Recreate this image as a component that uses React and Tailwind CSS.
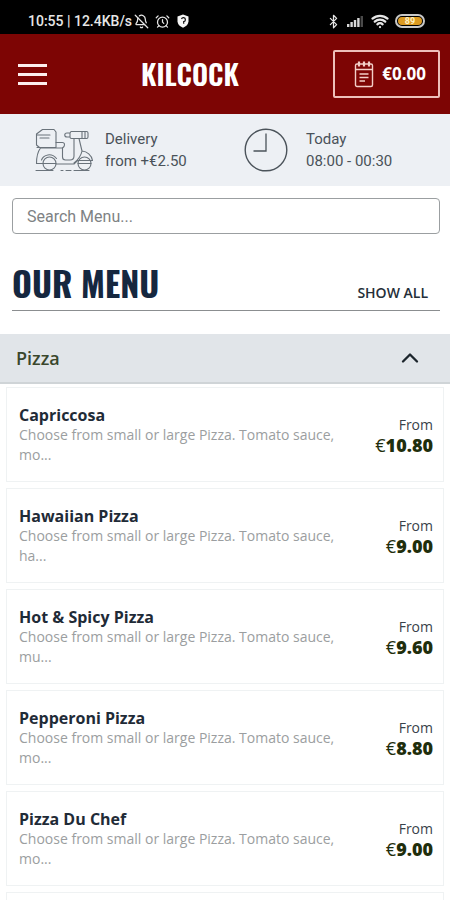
import React, { useState } from 'react';
import { AlarmClock, BellOff, Bluetooth, ChevronUp, Wifi } from 'lucide-react';

const PIZZAS = [
  { name: 'Capriccosa', description: 'Choose from small or large Pizza. Tomato sauce, mo...', price: '10.80' },
  { name: 'Hawaiian Pizza', description: 'Choose from small or large Pizza. Tomato sauce, ha...', price: '9.00' },
  { name: 'Hot & Spicy Pizza', description: 'Choose from small or large Pizza. Tomato sauce, mu...', price: '9.60' },
  { name: 'Pepperoni Pizza', description: 'Choose from small or large Pizza. Tomato sauce, mo...', price: '8.80' },
  { name: 'Pizza Du Chef', description: 'Choose from small or large Pizza. Tomato sauce, mo...', price: '9.00' },
];

const SignalIcon = () => (
  <svg className="w-[18px] h-[14px]" viewBox="0 0 18 14" fill="#d8d8d8">
    <rect x="0" y="10" width="2.4" height="3" />
    <rect x="3.4" y="8" width="2.4" height="5" />
    <rect x="6.8" y="6" width="2.4" height="7" />
    <rect x="10.2" y="4" width="2.4" height="9" />
    <rect x="13.6" y="2" width="2.4" height="11" fill="#4a4a4a" />
  </svg>
);

const ShieldIcon = () => (
  <svg className="w-3.5 h-3.5" viewBox="0 0 14 14">
    <path d="M7 .5 12.5 2.500v4.700c0 3-2.300 5.200-5.500 6.500-3.200-1.300-5.500-3.500-5.500-6.500V2.500z" fill="#f5f5f5" />
    <path d="M5.500 5a2 2 0 1 1 2.200 2.600v2.200" fill="none" stroke="#111" strokeWidth="1.200" />
  </svg>
);

const NotepadIcon = () => (
  <svg className="w-5 h-7" viewBox="0 0 20 28" fill="none" stroke="#f3cfc8" strokeWidth="1.400">
    <rect x="1.500" y="4" width="17" height="22.500" rx="1.500" />
    <path d="M1.500 9.500h17M5.500 14h9M5.500 17.500h9M5.500 21h5.500" />
    <path d="M5 1.500v5M10 1.500v5M15 1.500v5" strokeWidth="2.200" />
  </svg>
);

const ScooterIcon = () => (
  <svg className="w-[58px] h-11" viewBox="0 0 58 44" fill="none" stroke="#6a737b" strokeWidth="1.100" strokeLinejoin="round" strokeLinecap="round">
    {/* Box */}
    <path d="M1.500 6 7.500 1.500h11.500l2 2.500v15.500H4.500L1.500 17zM1.500 7h13.500M5 10h9M2 19.500h19" />
    {/* Seat and floor */}
    <path d="M21 14.500h6.500c2 0 2.500 2 1.500 4l-1.500 1.500v9c0 2 1 3 3 3h4.500c2.500 0 4-1.500 4-4V11" />
    {/* Handlebar */}
    <path d="M35 5l1-1.500h15.500c1 0 1.500.5 1.500 1.500v4c0 1-.5 1.500-1.500 1.500H36.500c-1 0-1.500-.5-1.500-1.500h-3c-3 0-3-4 0-4zM35 5v4M47 3.500v7M50 3.500v7" />
    {/* Front */}
    <path d="M44 10.500 47 23c5 .5 9.500 4 10.500 9.500H42.500l-3.500 3.500H21.500M47 23c-1 5-3 8-8 12" />
    {/* Rear body */}
    <path d="M5.500 20c-3 4-4 9-4 15.500H8M27.500 20H5.500" />
    <path d="M6.500 32c2-5.500 10-7.500 15-1.500" />
    <circle cx="14.500" cy="35.500" r="6.500" />
    <circle cx="49.500" cy="35.500" r="6.500" />
    <path d="M8 35.500h13M43 35.500h13" />
    <path d="M1 42.500h17M26 42.500h2M31 42.500h5M39 42.500h15" />
  </svg>
);

const ClockIcon = () => (
  <svg className="w-11 h-11" viewBox="0 0 44 44" fill="none" stroke="#4b535a">
    <circle cx="22" cy="22" r="20.800" strokeWidth="1.400" />
    <path d="M22 5.500V23H9.500" strokeWidth="1.300" />
  </svg>
);

const StatusBar = () => (
  <div className="flex items-center h-[34px] pl-7 pr-[25px] pt-2 bg-black text-[#e6e6e6] font-['Roboto',sans-serif]">
    <span className="text-sm font-medium">10:55 | 12.4KB/s</span>
    <div className="flex items-center gap-1.5 ml-0.5">
      <BellOff className="w-[15px] h-[15px]" />
      <AlarmClock className="w-[15px] h-[15px]" />
      <ShieldIcon />
    </div>
    <div className="flex items-center gap-1.5 ml-auto">
      <Bluetooth className="w-[15px] h-[15px]" />
      <SignalIcon />
      <Wifi className="w-[18px] h-[18px]" strokeWidth={3} />
      <span className="flex items-center w-[30px] h-3.5 p-px border-2 border-[#c9c9c9] rounded-full">
        <span className="flex-1 h-2 rounded-sm bg-[#dc9a20] text-[9px] leading-2 font-bold text-center text-[#fff0c0]">89</span>
      </span>
    </div>
  </div>
);

const MenuItem = ({ item }) => (
  <li className="flex items-center h-[95px] pl-3 pr-2.5 border border-[#eff2f3] bg-white">
    <div className="flex-1 min-w-0">
      <h3 className="text-base leading-5 font-bold text-[#1f2b37]">{item.name}</h3>
      <p className="text-sm leading-5 text-[#9b9ea0]">{item.description}</p>
    </div>
    <div className="w-[88px] text-right">
      <p className="text-sm leading-5 text-[#39424a]">From</p>
      <p className="text-lg leading-5 font-extrabold text-[#1f2e0c]">
        <span className="font-normal">€</span>{item.price}
      </p>
    </div>
  </li>
);

const App = () => {
  const [open, setOpen] = useState(true);
  const [search, setSearch] = useState('');

  const pizzas = PIZZAS.filter((p) => p.name.toLowerCase().includes(search.toLowerCase()));

  return (
    <div className="h-screen overflow-hidden bg-white font-['Open_Sans',sans-serif]">
      <StatusBar />

      {/* Header */}
      <header className="flex items-center justify-between h-20 pl-[18px] pr-2.5 bg-[#7d0504] text-white">
        <button type="button" aria-label="Open menu" className="flex flex-col gap-1.5 w-[29px]">
          <span className="h-[3px] bg-[#fdeeee]" />
          <span className="h-[3px] bg-[#fdeeee]" />
          <span className="h-[3px] bg-[#fdeeee]" />
        </button>
        <h1 className="text-[28px] font-semibold font-['Oswald','Roboto_Condensed','Liberation_Sans_Narrow',sans-serif]">KILCOCK</h1>
        <button type="button" className="flex items-center justify-end gap-2 w-[107px] h-12 pr-3 rounded-xs border-2 border-[#eec0ba]">
          <NotepadIcon />
          <span className="text-[17px] font-bold">€0.00</span>
        </button>
      </header>

      {/* Delivery info */}
      <div className="grid grid-cols-2 h-[72px] px-[35px] bg-[#edf0f4] text-[15px] leading-[22px] text-[#4a5259] font-['Roboto',sans-serif]">
        <div className="flex items-center gap-3">
          <ScooterIcon />
          <p>Delivery<br />from +€2.50</p>
        </div>
        <div className="flex items-center gap-[18px] pl-[19px]">
          <ClockIcon />
          <p>Today<br />08:00 - 00:30</p>
        </div>
      </div>

      <div className="pl-3 pr-2.5 pt-3">
        <input
          type="text"
          aria-label="Search Menu"
          placeholder="Search Menu..."
          value={search}
          onChange={(e) => setSearch(e.target.value)}
          className="block w-full h-9 px-3.5 rounded-sm border border-[#9b9fa1] text-base placeholder:text-[#7e8284] font-['Roboto',sans-serif]"
        />
        <div className="flex items-end justify-between h-[77px] pb-[7px] pr-3 border-b border-[#8b8e90]">
          <h2 className="text-[34px] leading-10 font-bold text-[#15273f] font-['Oswald','Roboto_Condensed','Liberation_Sans_Narrow',sans-serif]">OUR MENU</h2>
          <button type="button" className="text-sm leading-5 font-semibold text-[#242e38]">SHOW ALL</button>
        </div>
      </div>

      {/* Category */}
      <button
        type="button"
        aria-expanded={open}
        onClick={() => setOpen(!open)}
        className="flex items-center justify-between w-full h-[50px] mt-[23px] px-4 border-b-2 border-[#cfd4d7] bg-[#e1e5e9] text-lg font-semibold text-[#3a472c]"
      >
        Pizza
        <ChevronUp className="w-7 h-7 mr-2.5 text-[#1c252c]" />
      </button>

      {open && (
        <ul className="flex flex-col gap-1.5 px-1.5 pt-[3px]">
          {pizzas.map((item) => (
            <MenuItem key={item.name} item={item} />
          ))}
          <li aria-hidden="true" className="h-[95px] border border-[#eff2f3]" />
        </ul>
      )}
    </div>
  );
};

export default App;
